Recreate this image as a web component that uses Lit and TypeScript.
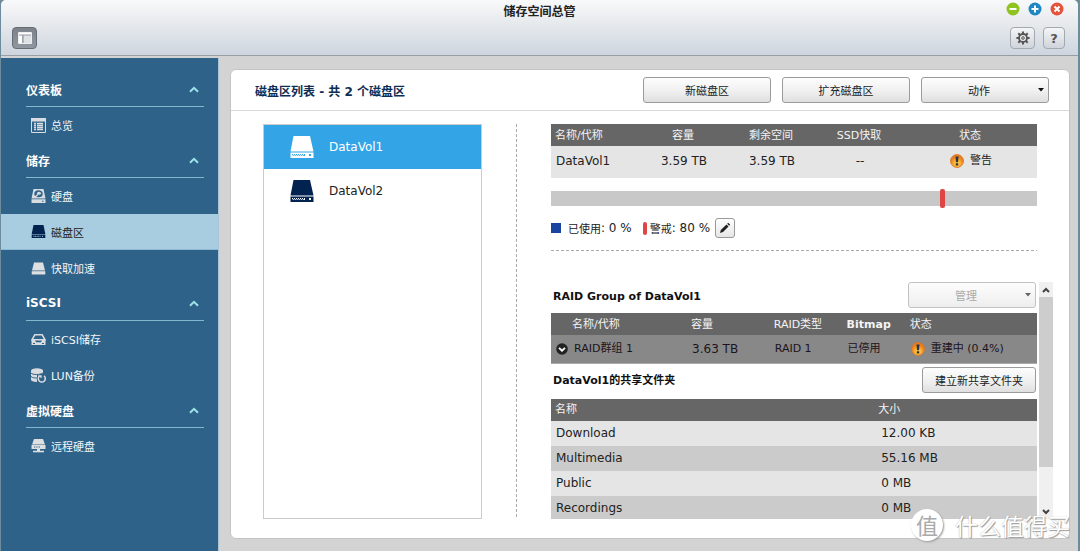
import { LitElement, html, css, svg, TemplateResult } from "lit";
import { customElement, property, state } from "lit/decorators.js";
import { classMap } from "lit/directives/class-map.js";

const glyphs: Record<string, TemplateResult> = {
  overview: svg`<path d="M.5 1h14v13.500h-14z" fill="none" stroke="#d9dde1"/><path d="M0 0h15v3.500H0z" fill="#d9dde1"/><path d="M3 5.500h2M6 5.500h6M3 7.500h2M6 7.500h6M3 9.500h2M6 9.500h6M3 11.500h2M6 11.500h6" stroke="#d9dde1" stroke-width="1.300"/>`,
  disk: svg`<path d="M2.500 0h10l2 9.500H.5z" fill="#d9dde1"/><path d="M.5 10.300h14V14H.5z" fill="#d9dde1"/><ellipse cx="7.500" cy="4.800" rx="4.200" ry="3.500" fill="#2e6289"/><ellipse cx="8" cy="4.300" rx="2" ry="1.500" fill="#d9dde1"/><path d="M3.500 8.500L7 5.500" stroke="#d9dde1" stroke-width="1.400"/><path d="M11 12.200h1.500" stroke="#2e6289"/>`,
  volume: svg`<path d="M2.500 1h10l1.800 9H.7z" fill="#02234f"/><path d="M.7 10.600h13.600V14H.7z" fill="#02234f"/><path d="M2.500 12.300h7M11 12.300h1.500" stroke="#a8cde1" stroke-dasharray="1 .6"/>`,
  cache: svg`<path d="M3 1.500h9l2 8H1z" fill="#dddfe1"/><path d="M.7 10.200h13.600V13.500H.7z" fill="#dddfe1"/>`,
  iscsi: svg`<path d="M3.800 2.800h7.400l2.800 5H1z" fill="none" stroke="#d9dde1" stroke-width="1.500"/><path d="M.5 7.500h14V13h-14z" fill="#d9dde1"/><path d="M4 8.500h7l-1 1.800H5z" fill="#2e6289"/><path d="M2 11.500h2M11 11.500h2" stroke="#2e6289"/>`,
  lun: svg`<path d="M0 3v8.500c0 1.500 2 2.500 6 2.500V3z" fill="#d9dde1"/><path d="M6 2h6v5H6z" fill="#d9dde1"/><ellipse cx="6" cy="2.500" rx="6" ry="2.200" fill="#d9dde1"/><path d="M0 5c1.500 2 9 2 12 0M0 8.500c1.500 1.500 4 1.500 6 1.500" fill="none" stroke="#2e6289"/><circle cx="10.800" cy="10.700" r="5" fill="#2e6289"/><path d="M8.600 7.800a3.500 3.500 0 1 0 4.400 0" fill="none" stroke="#d9dde1" stroke-width="1.500"/><path d="M7 7.200h3.600v3.300z" fill="#d9dde1"/>`,
  remote: svg`<path d="M3 0h9l2 5.500H1z" fill="#dddfe1"/><path d="M.5 6h14v4H.5z" fill="#dddfe1"/><path d="M3 8h6" stroke="#2e6289" stroke-dasharray="1 .7"/><path d="M7.500 10v2" stroke="#dddfe1" stroke-width="3"/><path d="M2 12.500h11" stroke="#dddfe1" stroke-width="1.600"/>`,
};

const warn = html`<svg class="warn" viewBox="0 0 14 14" aria-hidden="true">
  <defs><radialGradient id="w" cy=".7"><stop offset="0" stop-color="#ffd85c"/><stop offset=".6" stop-color="#f9a72b"/><stop offset="1" stop-color="#e87f1f"/></radialGradient></defs>
  <circle cx="7" cy="7" r="6.500" fill="url(#w)" stroke="#d8732a" stroke-width=".8"/>
  <path d="M5.500 2.500h3L8 8.300H6zM5.800 9.200h2.400v2.200H5.800z" fill="#2b3444"/></svg>`;

const base = css`
  * { box-sizing: border-box; }
  svg { display: block; flex: none; }
  button, select { font: inherit; color: inherit; margin: 0; padding: 0; }
  .btn {
    height: 26px; border: 1px solid #9b9b9b; border-radius: 3px; color: #222;
    background: linear-gradient(#fdfdfd, #f1f1f1 50%, #dfdfdf); font-size: 11px; text-align: center;
  }
`;

@customElement("nav-menu")
class NavMenu extends LitElement {
  @state() current = "磁盘区";
  groups = [
    { title: "仪表板", items: [["overview", "总览"]] },
    { title: "储存", items: [["disk", "硬盘"], ["volume", "磁盘区"], ["cache", "快取加速"]] },
    { title: "iSCSI", items: [["iscsi", "iSCSI储存"], ["lun", "LUN备份"]] },
    { title: "虚拟硬盘", items: [["remote", "远程硬盘"]] },
  ];
  static styles = [base, css`
    :host { display: block; background: #2e6289; color: #f1f5f8; padding-top: 14px; border-right: 1px solid #a9c4d6; }
    .head {
      display: flex; align-items: center; justify-content: space-between; width: calc(100% - 39px);
      height: 35px; margin-left: 25px; padding: 0 5px 0 0; border: 0; border-bottom: 1px solid #7fb9cd;
      background: none; font-size: 12px; font-weight: bold; color: #fff;
    }
    .item {
      display: flex; align-items: center; gap: 5px; height: 36px; padding-left: 30px;
      color: inherit; text-decoration: none; font-size: 11px;
    }
    .item.on { background: #a8cde1; color: #222; border-bottom: 1px solid #8db9d3; }
  `];
  render() {
    return html`<nav>${this.groups.map((g) => html`
      <button class="head">${g.title}<svg width="10" height="7" viewBox="0 0 10 7"><path d="M1 5.800l4-4 4 4" fill="none" stroke="#9be3e8" stroke-width="2"/></svg></button>
      ${g.items.map(([icon, label]) => html`<a href="#" class=${classMap({ item: true, on: label === this.current })}
        @click=${(e: Event) => { e.preventDefault(); this.current = label; }}>
        <svg width="15" height="15" viewBox="0 0 15 15">${glyphs[icon]}</svg>${label}</a>`)}`)}</nav>`;
  }
}

@customElement("menu-select")
class MenuSelect extends LitElement {
  @property() label = "";
  @property({ type: Boolean }) disabled = false;
  static styles = [base, css`
    :host { display: block; width: 128px; }
    .wrap { display: grid; align-items: center; }
    .wrap > * { grid-area: 1 / 1; }
    select { appearance: none; width: 100%; text-align-last: center; padding: 3px 12px 0 0; }
    select:disabled { color: #aaa; border-color: #c2c2c2; opacity: 1; background: linear-gradient(#fdfdfd, #eee); }
    svg { justify-self: end; margin-right: 5px; pointer-events: none; z-index: 1; }
  `];
  render() {
    return html`<div class="wrap"><select class="btn" aria-label=${this.label} ?disabled=${this.disabled}><option>${this.label}</option></select>
      <svg width="6" height="4" viewBox="0 0 6 4"><path d="M0 0h6L3 3.500z" fill=${this.disabled ? "#666" : "#111"}/></svg></div>`;
  }
}

@customElement("volume-list")
class VolumeList extends LitElement {
  @state() selected = "DataVol1";
  static styles = [base, css`
    :host { display: block; border: 1px solid #ccc; background: #fff; }
    .row {
      display: flex; align-items: center; gap: 15px; width: 100%; height: 44px; padding-left: 26px;
      border: 0; background: none; font-size: 12px; color: #222;
    }
    .row svg { color: #02234f; }
    .on { background: #33a5e7; color: #fff; }
    .on svg { color: #fff; }
  `];
  render() {
    return html`${["DataVol1", "DataVol2"].map((v) => html`
      <button class=${classMap({ row: true, on: v === this.selected })} @click=${() => (this.selected = v)}>
        <svg width="24" height="24" viewBox="0 0 24 24"><path fill="currentColor" fill-rule="evenodd" d="M3.500 1h16.500l3.500 15.500H.5zM.5 17.500h23V23H.5zM2 19v1.300h1V19zM4 19v2h1v-2zM6 19v2h1v-2zM8 19v2h1v-2zM10 19v2h1v-2zM12 19v2h1v-2zM14 19v2h1v-2zM3 20.300v.7h11v-.7zM19 19v2h2v-2z"/></svg>
        <span>${v}</span></button>`)}`;
  }
}

@customElement("volume-detail")
class VolumeDetail extends LitElement {
  threshold = 80;
  shares = [["Download", "12.00 KB"], ["Multimedia", "55.16 MB"], ["Public", "0 MB"], ["Recordings", "0 MB"]];
  static styles = [base, css`
    :host { display: flex; flex-direction: column; min-height: 0; color: #222; font-size: 12px; }
    table { width: 100%; border-collapse: collapse; table-layout: fixed; }
    th { height: 22px; padding: 1px 0 0 4px; background: #666; color: #f4f4f4; font-size: 11px; font-weight: normal; text-align: left; line-height: 16px; }
    td { height: 25px; padding: 0 0 0 5px; line-height: 16px; }
    .top { margin-right: 16px; }
    .sum td { height: 32px; padding-bottom: 2px; background: #e5e5e5; }
    .sum th + th { text-align: center; padding: 1px 0 0; }
    .sum td + td { text-align: center; padding: 0 0 2px 2px; }
    .c88 { width: 88px; }
    .state { display: inline-flex; align-items: center; gap: 6px; font-size: 11px; vertical-align: middle; }
    .warn { width: 14px; height: 14px; }
    .bar { position: relative; height: 15px; margin-top: 13px; background: #c8c8c8; }
    .mark { position: absolute; top: -2px; bottom: -2px; width: 5px; border-radius: 2px; background: #e04545; }
    .legend { display: flex; align-items: center; height: 22px; margin-top: 11px; font-size: 11px; }
    .latin { font-size: 12px; white-space: pre; }
    .used { width: 10px; height: 10px; margin-right: 7px; background: #1b43a0; }
    .limit { width: 4px; height: 13px; margin: 0 3px 0 11px; border-radius: 2px; background: #e04545; }
    .edit { display: grid; place-items: center; width: 20px; height: 20px; margin-left: 5px; border: 1px solid #999; border-radius: 3px; background: linear-gradient(#fff, #e6e6e6); }
    .rule { height: 1px; margin-top: 11px; background: repeating-linear-gradient(90deg, #aaa 0 3px, transparent 3px 5px); }
    .scroll { display: flex; flex: 1; min-height: 0; gap: 2px; margin-top: 31px; overflow: hidden; }
    .content { flex: 1; min-width: 0; overflow: hidden; }
    .line { display: flex; align-items: flex-start; justify-content: space-between; height: 31px; padding: 0 1px 0 2px; }
    .line.second { height: 35px; padding-top: 3px; }
    h3 { margin: 0; font-size: 11px; line-height: 30px; color: #111; }
    .second h3 { line-height: 28px; }
    .create { width: 114px; }
    .raid td { height: 28px; background: #888; border-bottom: 1px solid #aaa; color: #1c141c; }
    .raid th:first-child { padding-left: 21px; }
    .raid .mid { font-size: 11px; }
    .raid .cjk { font-size: 11px; }
    .name { display: flex; align-items: center; gap: 6px; }
    .files td { background: #e5e5e5; }
    .files tr:nth-child(even) td { background: #cbcbcb; }
    .files td + td { padding-left: 7px; }
    .sb { display: flex; flex-direction: column; width: 14px; background: #f0f0f0; }
    .sb button { display: grid; place-items: center; height: 15px; border: 0; background: none; }
    .track { flex: 1; }
    .thumb { height: 82%; background: #cdcdcd; }
  `];
  render() {
    return html`
      <div class="top">
        <table class="sum">
          <colgroup><col class="c88"><col class="c88"><col class="c88"><col class="c88"><col></colgroup>
          <thead><tr><th>名称/代称</th><th>容量</th><th>剩余空间</th><th>SSD快取</th><th>状态</th></tr></thead>
          <tbody><tr><td>DataVol1</td><td>3.59 TB</td><td>3.59 TB</td><td>--</td><td><span class="state">${warn}警告</span></td></tr></tbody>
        </table>
        <div class="bar"><div class="mark" style="left:${this.threshold}%"></div></div>
        <div class="legend"><span class="used"></span>已使用<span class="latin">: 0 %</span>
          <span class="limit"></span>警戒<span class="latin">: ${this.threshold} %</span>
          <button class="edit" aria-label="编辑"><svg width="12" height="12" viewBox="0 0 12 12"><path d="M1 11l.8-3L7.500 2.500l2 2L4 10z M8.200 1.800l1-1 2 2-1 1z" fill="#222"/></svg></button></div>
        <div class="rule"></div>
      </div>
      <div class="scroll">
        <div class="content">
          <div class="line"><h3>RAID Group of DataVol1</h3><menu-select label="管理" disabled></menu-select></div>
          <table class="raid">
            <colgroup><col style="width:28%"><col style="width:17%"><col style="width:15%"><col style="width:13%"><col></colgroup>
            <thead><tr><th>名称/代称</th><th>容量</th><th>RAID类型</th><th><b>Bitmap</b></th><th>状态</th></tr></thead>
            <tbody><tr><td><span class="name"><svg width="12" height="12" viewBox="0 0 12 12"><circle cx="6" cy="6" r="5.800" fill="#222"/><path d="M3 4.800l3 2.900 3-2.900" fill="none" stroke="#fff" stroke-width="1.800"/></svg><span class="cjk">RAID群组 1</span></span></td>
              <td>3.63 TB</td><td class="mid">RAID 1</td><td class="cjk">已停用</td><td><span class="state">${warn}重建中 (0.4%)</span></td></tr></tbody>
          </table>
          <div class="line second"><h3>DataVol1的共享文件夹</h3><button class="btn create">建立新共享文件夹</button></div>
          <table class="files">
            <colgroup><col style="width:66.500%"><col></colgroup>
            <thead><tr><th>名称</th><th>大小</th></tr></thead>
            <tbody>${this.shares.map(([n, s]) => html`<tr><td>${n}</td><td>${s}</td></tr>`)}</tbody>
          </table>
        </div>
        <div class="sb">
          <button aria-label="向上"><svg width="8" height="6" viewBox="0 0 8 6"><path d="M1 5l3-3 3 3" fill="none" stroke="#444" stroke-width="2"/></svg></button>
          <div class="track"><div class="thumb"></div></div>
          <button aria-label="向下"><svg width="8" height="6" viewBox="0 0 8 6"><path d="M1 1l3 3 3-3" fill="none" stroke="#444" stroke-width="2"/></svg></button>
        </div>
      </div>`;
  }
}

@customElement("app-root")
class AppRoot extends LitElement {
  static styles = [base, css`
    :host {
      display: flex; height: 100vh; padding: 0 2px 2px 1px; background: #6c8c9b; overflow: hidden; position: relative;
      font-family: "DejaVu Sans", "Noto Sans CJK SC", sans-serif; font-size: 12px; color: #222;
    }
    .window { display: flex; flex-direction: column; flex: 1; min-width: 0; background: #d3d3d3; border-radius: 5px 5px 0 0; overflow: hidden; }
    header {
      display: grid; grid-template-columns: 1fr auto 1fr; height: 56px; flex: none;
      background: linear-gradient(#f8f9fa, #e8ebee 40%, #ced5de); border-bottom: 1px solid #9a9ea3;
    }
    .left { align-self: end; padding: 0 0 6px 11px; }
    h1 { margin: 4px 0 0; font-size: 12px; line-height: 17px; color: #222; }
    .right { display: flex; flex-direction: column; align-items: flex-end; gap: 11px; padding-top: 2px; }
    .dots { display: flex; gap: 8px; padding-right: 14px; }
    .dots button { width: 14px; height: 14px; border: 0; background: none; }
    .tools { display: flex; gap: 8px; padding-right: 13px; }
    .sq { display: grid; place-items: center; width: 25px; height: 22px; border: 1px solid #a3a9b0; border-radius: 4px; background: linear-gradient(#f4f5f7, #cfd4db); color: #555; font-weight: bold; font-size: 13px; }
    .sq.help { width: 22px; }
    .sq.down { background: linear-gradient(#7b828a, #9097a0); border-color: #666d74; }
    .body { display: grid; grid-template-columns: 218px 1fr; flex: 1; min-height: 0; padding-top: 2px; }
    main { display: flex; flex-direction: column; min-width: 0; min-height: 0; margin: 11px 8px 12px 11px; border: 1px solid #c4c4c4; border-radius: 6px; background: #fff; }
    .bar { display: flex; align-items: center; gap: 11px; height: 41px; padding: 0 20px 0 24px; border-bottom: 1px solid #dadada; }
    h2 { flex: 1; margin: 0; font-size: 12px; color: #0f2c52; }
    .new { width: 128px; }
    .cols { display: grid; grid-template-columns: 219px 1px 1fr; gap: 34px; flex: 1; min-height: 0; padding: 13px 16px 19px 32px; }
    .dash { background: repeating-linear-gradient(#aaa 0 3px, transparent 3px 5px); }
    .mark { position: absolute; right: 10px; bottom: 12px; display: flex; align-items: center; gap: 12px; font: 23px/32px "Noto Sans CJK SC", sans-serif; color: #fff; text-shadow: 1px 1px 1px #999, 0 0 1px #aaa; pointer-events: none; }
    .seal { width: 32px; height: 32px; border-radius: 50%; background: #fff; box-shadow: 1px 1px 2px #999; color: #aaa; font-size: 22px; line-height: 31px; text-align: center; text-shadow: none; }
  `];
  dot(color: string, d: string, label: string) {
    return html`<button aria-label=${label}><svg width="14" height="14" viewBox="0 0 14 14"><circle cx="7" cy="7" r="6.500" fill=${color}/><path d=${d} stroke="#fff" stroke-width="2" fill="none"/></svg></button>`;
  }
  render() {
    return html`
      <div class="window">
        <header>
          <div class="left"><button class="sq down" aria-label="切换面板"><svg width="14" height="12" viewBox="0 0 14 12"><path d="M.5.5h13v11H.5z" fill="#aab0b7" stroke="#eee"/><path d="M1 3h12" stroke="#7b828a"/><path d="M1 1h12v1.500H1zM1 3.500h3.500V11H1z" fill="#fff"/><path d="M5 3.500V11" stroke="#6c737a"/><path d="M5.500 3.500H13V11H5.500z" fill="#dfe2e5"/></svg></button></div>
          <h1>储存空间总管</h1>
          <div class="right">
            <div class="dots">${this.dot("#8fc31f", "M3.500 7h7", "最小化")}${this.dot("#1d87c4", "M3.500 7h7M7 3.500v7", "最大化")}${this.dot("#e5533c", "M4.500 4.500l5 5M9.500 4.500l-5 5", "关闭")}</div>
            <div class="tools">
              <button class="sq" aria-label="设置"><svg width="14" height="14" viewBox="0 0 14 14"><g stroke="#555" fill="none"><circle cx="7" cy="7" r="4" stroke-width="1.800"/><circle cx="7" cy="7" r="1.300"/><path stroke-width="2" d="M7 .4v2.400M7 11.200v2.400M.4 7h2.400M11.200 7h2.400M2.300 2.300L4 4M10 10l1.700 1.700M2.300 11.700L4 10M10 4l1.700-1.700"/></g></svg></button>
              <button class="sq help">?</button>
            </div>
          </div>
        </header>
        <div class="body">
          <nav-menu></nav-menu>
          <main>
            <div class="bar"><h2>磁盘区列表 - 共 2 个磁盘区</h2><button class="btn new">新磁盘区</button><button class="btn new">扩充磁盘区</button><menu-select label="动作"></menu-select></div>
            <div class="cols"><volume-list></volume-list><div class="dash"></div><volume-detail></volume-detail></div>
          </main>
        </div>
      </div>
      <div class="mark"><span class="seal">值</span>什么值得买</div>`;
  }
}
